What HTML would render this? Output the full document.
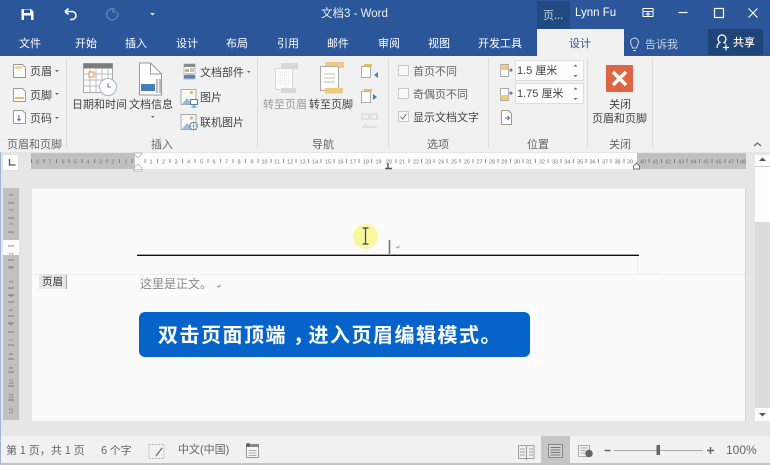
<!DOCTYPE html>
<html><head><meta charset="utf-8"><style>
html,body{margin:0;padding:0}
body{width:770px;height:465px;overflow:hidden;position:relative;background:#e6e6e6;font-family:"Liberation Sans","Noto Sans CJK SC",sans-serif;font-size:11px;color:#444}
div,span.t{position:absolute}
.t{position:absolute;white-space:nowrap;line-height:14px;font-family:"Noto Sans CJK SC",sans-serif;font-size:11px}
.w{color:#fff}.g{color:#9a9a9a}.m{color:#666}
svg{position:absolute;left:0;top:0}
</style></head><body>
<div style="left:0;top:0;width:770px;height:56px;background:#2b579a"></div>
<div style="left:0;top:56px;width:770px;height:96px;background:#f1f1f1"></div>
<div style="left:537px;top:29px;width:87px;height:27px;background:#f1f1f1"></div>
<div style="left:537px;top:1px;width:33px;height:28px;background:#214a80"></div>
<div style="left:708px;top:29px;width:55px;height:26px;background:#1f4478"></div>
<div style="left:515px;top:60px;width:69px;height:21px;background:#fdfdfd;border:1px solid #ddd;box-sizing:border-box"></div>
<div style="left:515px;top:83px;width:69px;height:21px;background:#fdfdfd;border:1px solid #ddd;box-sizing:border-box"></div>

<span class="t w" style="left:321px;top:7px;font-size:11.500px;font-family:'Liberation Sans','Noto Sans CJK SC',sans-serif;color:#e8eef6">文档3 - Word</span>
<span class="t" style="left:543px;top:8px;color:#c5d2e4">页...</span>
<span class="t w" style="left:575px;top:6px;font-family:'Liberation Sans',sans-serif;font-size:11.500px">Lynn Fu</span>

<span class="t w" style="left:19px;top:36px">文件</span>
<span class="t w" style="left:75px;top:36px">开始</span>
<span class="t w" style="left:125px;top:36px">插入</span>
<span class="t w" style="left:176px;top:36px">设计</span>
<span class="t w" style="left:226px;top:36px">布局</span>
<span class="t w" style="left:277px;top:36px">引用</span>
<span class="t w" style="left:327px;top:36px">邮件</span>
<span class="t w" style="left:378px;top:36px">审阅</span>
<span class="t w" style="left:428px;top:36px">视图</span>
<span class="t w" style="left:478px;top:36px">开发工具</span>
<span class="t" style="left:569px;top:36px;color:#2b579a">设计</span>
<span class="t" style="left:645px;top:37px;color:#c5d2e4">告诉我</span>
<span class="t w" style="left:733px;top:35px;font-weight:500">共享</span>

<span class="t" style="left:30px;top:64px">页眉</span>
<span class="t" style="left:30px;top:88px">页脚</span>
<span class="t" style="left:30px;top:111px">页码</span>
<span class="t m" style="left:7px;top:137px">页眉和页脚</span>
<span class="t" style="left:72px;top:97px">日期和时间</span>
<span class="t" style="left:129px;top:97px">文档信息</span>
<span class="t" style="left:200px;top:65px">文档部件</span>
<span class="t" style="left:200px;top:90px">图片</span>
<span class="t" style="left:200px;top:115px">联机图片</span>
<span class="t m" style="left:151px;top:137px">插入</span>
<span class="t g" style="left:263px;top:97px">转至页眉</span>
<span class="t" style="left:309px;top:97px">转至页脚</span>
<span class="t m" style="left:312px;top:137px">导航</span>
<span class="t m" style="left:413px;top:64px">首页不同</span>
<span class="t m" style="left:413px;top:87px">奇偶页不同</span>
<span class="t" style="left:413px;top:110px">显示文档文字</span>
<span class="t m" style="left:427px;top:137px">选项</span>
<span class="t" style="left:517px;top:64px;font-family:'Liberation Sans','Noto Sans CJK SC',sans-serif">1.5 厘米</span>
<span class="t" style="left:517px;top:87px;font-family:'Liberation Sans','Noto Sans CJK SC',sans-serif">1.75 厘米</span>
<span class="t m" style="left:527px;top:137px">位置</span>
<span class="t" style="left:609px;top:97px">关闭</span>
<span class="t" style="left:592px;top:111px">页眉和页脚</span>
<span class="t m" style="left:609px;top:137px">关闭</span>

<!-- work area -->
<div style="left:32px;top:189px;width:713px;height:232px;background:#fbfbfb;border-right:1px solid #d4d4d4"></div>
<div style="left:31px;top:153px;width:104px;height:16px;background:#c0c0c0"></div>
<div style="left:135px;top:153px;width:502px;height:16px;background:#fdfdfd"></div>
<div style="left:637px;top:153px;width:109px;height:16px;background:#c0c0c0"></div>
<div style="left:2px;top:154px;width:17px;height:17px;background:#fdfdfd;border:1px solid #e0e0e0;box-sizing:border-box"></div>
<div style="left:3px;top:188px;width:16px;height:232px;background:#c0c0c0"></div>
<div style="left:3px;top:240px;width:16px;height:15px;background:#fdfdfd"></div>
<div style="left:755px;top:155px;width:15px;height:253px;background:#dcdcdc"></div>
<div style="left:755px;top:155px;width:15px;height:12px;background:#fdfdfd;border-bottom:1px solid #ccc;box-sizing:border-box"></div>
<div style="left:755px;top:167px;width:15px;height:55px;background:#fdfdfd"></div>
<div style="left:755px;top:408px;width:15px;height:13px;background:#fdfdfd"></div>
<div style="left:0;top:436px;width:770px;height:29px;background:#f1f1f1"></div>
<div style="left:541px;top:436px;width:29px;height:27px;background:#c6c6c6"></div>
<div style="left:0;top:463px;width:770px;height:2px;background:#b9c5d4"></div>
<div style="left:0;top:152px;width:1px;height:312px;background:#9db4d2"></div>

<div style="left:139px;top:312px;width:391px;height:45px;background:#0563c9;border-radius:6px"></div>
<span class="t" style="left:158px;top:321px;line-height:26px;font-size:20px;font-weight:700;color:#fff;letter-spacing:1.500px">双击页面顶端<span style="position:relative;left:6px">，</span>进入页眉编辑模式。</span>

<div style="left:39px;top:274px;width:28px;height:15px;background:#e6e6e6;border-right:1px solid #aaa;box-sizing:border-box"></div>
<span class="t" style="left:42px;top:275px;color:#333;font-size:10.500px">页眉</span>
<span class="t" style="left:140px;top:276px;font-size:12px;line-height:16px;color:#8a8a8a;letter-spacing:0">这里是正文。</span>

<span class="t m" style="left:6px;top:443px;letter-spacing:.15px">第 1 页，共 1 页</span>
<span class="t m" style="left:101px;top:443px">6 个字</span>
<span class="t m" style="left:178px;top:443px;font-family:'Liberation Sans','Noto Sans CJK SC',sans-serif">中文(中国)</span>
<span class="t m" style="left:726px;top:443px;font-family:'Liberation Sans',sans-serif;font-size:12px">100%</span>

<svg width="770" height="465" viewBox="0 0 770 465" fill="none">
<!-- QAT -->
<path d="M21.500 9h9.500l2.500 2.500v8.500h-12z" fill="#fff"/><rect x="24" y="9.500" width="6" height="3.500" fill="#2b579a"/><rect x="24" y="15.500" width="7" height="4.500" fill="#2b579a"/>
<path d="M65 11.500h7a4 4 0 0 1 0 8h-2M65 11.500l3.500-3M65 11.500l3.500 3" stroke="#fff" stroke-width="1.600"/>
<path d="M115 9.500a5.500 5.500 0 1 0 2.500 3M113 8v4h4" stroke="#5f7fb0" stroke-width="1.500"/>
<path d="M150 13h5l-2.500 2.500z" fill="#dfe7f2"/>
<!-- window controls -->
<path d="M643 8.500h10v8h-10zM643 11.500h10M648 11.500v5M645.500 14h5" stroke="#fff"/>
<path d="M678.500 12.500h9" stroke="#fff" stroke-width="1.200"/>
<rect x="714.500" y="8.500" width="9" height="9" stroke="#fff" stroke-width="1.200"/>
<path d="M748.500 8.500l9 9M757.500 8.500l-9 9" stroke="#fff" stroke-width="1.100"/>
<!-- tell me / share -->
<path d="M632.500 48c0-2-2-3-2-6a4 4 0 0 1 8 0c0 3-2 4-2 6zM633 50.500h3" stroke="#c5d2e4"/>
<path d="M717 48c0-3 1-4.500 3-5.500a4 4 0 1 1 4 0c.7.3 1.200.7 1.700 1.200M726 44.500v6M723 47.500h6" stroke="#fff" stroke-width="1.200"/>
<!-- header/footer/page -->
<g stroke="#9a9a9a" fill="#fff"><path d="M13.500 64.500h9l3 3v10h-12z"/><path d="M13.500 88.500h9l3 3v10h-12z"/><path d="M13.500 110.500h9l3 3v10h-12z"/></g>
<path d="M15 66h7v3h-7z" fill="#f0d9a0"/><path d="M15 97h9v2h-9z" fill="#e8bd5f"/><path d="M19 115v5M17.500 119l1.500 1.500 1.500-1.500" stroke="#3d6fb0"/>
<path d="M55 70h4l-2 2zM55 93h4l-2 2zM55 117h4l-2 2zM247 71h3.500l-1.750 2zM151 116h3.500l-1.750 2z" fill="#666"/>
<path d="M66.500 58v90M257.500 58v90M388.500 58v90M488.500 58v90M587.500 58v90M652.500 58v90" stroke="#dcdcdc"/>
<!-- date -->
<rect x="83.500" y="63.500" width="29" height="29" fill="#fff" stroke="#aaa"/><rect x="83.500" y="63.500" width="29" height="5" fill="#7c7c7c"/>
<path d="M83.500 74h29M83.500 80h29M83.500 86h29M90 68v24M96 68v24M102 68v24M108 68v24" stroke="#bbb"/>
<rect x="89" y="72" width="5" height="5" stroke="#e08a40" fill="#fff"/>
<circle cx="108" cy="87" r="8.500" fill="#fff" stroke="#9db8d8"/><path d="M108 83v4h3" stroke="#777"/>
<!-- doc info -->
<path d="M139.500 63h11l11 11v21h-22z" fill="#fff" stroke="#999"/><path d="M150.500 63v11h11" stroke="#999"/>
<rect x="141" y="84" width="14" height="7" fill="#4a7ebb"/><path d="M157 79v14M160 79v14" stroke="#777"/>
<!-- parts -->
<rect x="184" y="64" width="11" height="15" fill="#fff" stroke="#bbb"/><rect x="184" y="64" width="11" height="3" fill="#8a8a8a"/><rect x="185" y="69" width="4" height="3" fill="#e0b050"/><path d="M190 69h4M190 71h4M185 74h9" stroke="#888"/><rect x="184" y="75" width="11" height="3.500" fill="#5b85b8"/>
<!-- picture -->
<rect x="181" y="89.500" width="15" height="15" fill="#f8f8f8" stroke="#aaa"/><circle cx="191.500" cy="92.500" r="1.500" fill="#e0b050"/><path d="M182 104l5-6 5 6z" fill="#9db8d8"/><rect x="190.500" y="99.500" width="7" height="5" fill="#fff" stroke="#4a7ebb"/><path d="M194 105v2M191.500 107h5" stroke="#4a7ebb"/>
<rect x="181" y="114.500" width="15" height="15" fill="#f8f8f8" stroke="#aaa"/><circle cx="191.500" cy="118" r="1.500" fill="#e0b050"/><path d="M182 129l5-6 5 6z" fill="#9db8d8"/><circle cx="193.500" cy="126" r="3.800" fill="#fff" stroke="#4a7ebb"/><path d="M190 126h7M193.500 122.500v7" stroke="#4a7ebb" stroke-width=".6"/>
<!-- nav -->
<rect x="281" y="63" width="17" height="6" fill="#d8d8d8"/><rect x="275.500" y="68.500" width="17" height="21" fill="#fbfbfb" stroke="#d8d8d8"/><path d="M278 72h12M278 75h12M278 78h12M278 81h12M278 84h12" stroke="#ddd" stroke-dasharray="1 1"/><rect x="281" y="88" width="15" height="5" fill="#d8d8d8"/>
<rect x="325" y="62" width="19" height="6" fill="#eecb80"/><rect x="320.500" y="66.500" width="18" height="24" fill="#fff" stroke="#aaa"/><path d="M324 74h11M324 78h11M324 82h11" stroke="#bbb"/><rect x="325" y="88" width="18" height="5.500" fill="#eecb80"/>
<g stroke="#aaa" fill="#fff"><rect x="361.500" y="66.500" width="9" height="11"/><rect x="361.500" y="91.500" width="9" height="11"/></g>
<rect x="364" y="64" width="8" height="2.500" fill="#e8bd5f"/><rect x="364" y="89" width="8" height="2.500" fill="#e8bd5f"/>
<path d="M378 72v6l-4-3zM373 94v6l4-3z" fill="#4a7ebb"/>
<path d="M362 114h7v5h-7zM371 114h6v5h-6zM364 125h3M362 127h15" stroke="#cfcfcf"/>
<!-- checkboxes -->
<g stroke="#c8c8c8" fill="#f8f8f8"><rect x="398.500" y="65.500" width="10" height="10"/><rect x="398.500" y="88.500" width="10" height="10"/><rect x="398.500" y="111.500" width="10" height="10"/></g>
<path d="M400.500 116.500l2 2.500 4-5" stroke="#666"/>
<!-- position -->
<rect x="500.500" y="64.500" width="8" height="12" fill="#fff" stroke="#aaa"/><rect x="500.500" y="65" width="8" height="5" fill="#eecb80"/><path d="M511 69v3M509.500 70.500l1.500-1.500 1.500 1.500" stroke="#3d6fb0"/>
<rect x="500.500" y="88.500" width="8" height="12" fill="#fff" stroke="#aaa"/><rect x="500.500" y="95" width="8" height="5" fill="#eecb80"/><path d="M511 92v3M509.500 93.500l1.500-1.500 1.500 1.500" stroke="#3d6fb0"/>
<path d="M573.500 66.500h4l-2-2zM573.500 75h4l-2 2zM573.500 89.500h4l-2-2zM573.500 98h4l-2 2z" fill="#666"/>
<path d="M501.500 110.500h7l3 3v11h-10z" fill="#fff" stroke="#999"/><path d="M505 118h4M507.500 116l2 2-2 2" stroke="#3d6fb0"/>
<!-- close -->
<rect x="606" y="65" width="27" height="27" rx="1" fill="#dd6543"/><path d="M613 72l13 13M626 72l-13 13" stroke="#fff" stroke-width="3.500"/>
<path d="M754 146l3.500-3 3.500 3" stroke="#666" stroke-width="1.200"/>
<!-- tab stop corner -->
<path d="M9.500 159v6h6" stroke="#555" stroke-width="1.300"/>
<!-- ruler numbers -->
<g font-family="Liberation Sans,sans-serif" font-size="5.500" fill="#777" text-anchor="middle">
<text x="37.500" y="163.500">8</text><text x="50" y="163.500">7</text><text x="63" y="163.500">6</text><text x="75.500" y="163.500">5</text><text x="88" y="163.500">4</text><text x="100.500" y="163.500">3</text><text x="113" y="163.500">2</text><text x="126" y="163.500">1</text>
<text x="151" y="163.500">1</text><text x="163.500" y="163.500">2</text><text x="176" y="163.500">3</text><text x="188.500" y="163.500">4</text><text x="201.500" y="163.500">5</text><text x="214" y="163.500">6</text><text x="226.500" y="163.500">7</text><text x="239" y="163.500">8</text><text x="252" y="163.500">9</text><text x="264.500" y="163.500">10</text><text x="277" y="163.500">11</text><text x="290" y="163.500">12</text><text x="302.500" y="163.500">13</text><text x="315" y="163.500">14</text><text x="328" y="163.500">15</text><text x="340.500" y="163.500">16</text><text x="353" y="163.500">17</text><text x="366" y="163.500">18</text><text x="378.500" y="163.500">19</text><text x="389" y="163.500">20</text><text x="402" y="163.500">21</text><text x="416" y="163.500">22</text><text x="428" y="163.500">23</text><text x="441" y="163.500">24</text><text x="454" y="163.500">25</text><text x="467" y="163.500">26</text><text x="479.500" y="163.500">27</text><text x="492" y="163.500">28</text><text x="504.500" y="163.500">29</text><text x="517" y="163.500">30</text><text x="529" y="163.500">31</text><text x="542" y="163.500">32</text><text x="555" y="163.500">33</text><text x="567.500" y="163.500">34</text><text x="580" y="163.500">35</text><text x="592.500" y="163.500">36</text><text x="605" y="163.500">37</text><text x="617.500" y="163.500">38</text><text x="630" y="163.500">39</text><text x="643" y="163.500">40</text><text x="655.500" y="163.500">41</text><text x="668" y="163.500">42</text><text x="681" y="163.500">43</text><text x="693.500" y="163.500">44</text><text x="706" y="163.500">45</text><text x="718.500" y="163.500">46</text><text x="731" y="163.500">47</text><text x="743" y="163.500">48</text>
</g>
<path d="M31.500 159v4M44 159v4M56.500 159v4M69 159v4M82 159v4M94.500 159v4M107 159v4M119.500 159v4M132 159v4M145 159v4M157.500 159v4M170 159v4M182.500 159v4M195 159v4M208 159v4M220.500 159v4M233 159v4M245.500 159v4M258 159v4M271 159v4M283.500 159v4M296 159v4M308.500 159v4M321 159v4M334 159v4M346.500 159v4M359 159v4M371.500 159v4M396 159v4M409 159v4M421.500 159v4M434 159v4M447 159v4M460 159v4M473 159v4M485.500 159v4M498 159v4M510.500 159v4M523 159v4M535.500 159v4M548 159v4M561 159v4M573.500 159v4M586 159v4M598.500 159v4M611 159v4M624 159v4M649 159v4M661.500 159v4M674.500 159v4M687 159v4M699.500 159v4M712 159v4M725 159v4M737.500 159v4" stroke="#666" stroke-width=".7"/>
<!-- indent markers -->
<path d="M134 153h8v1l-4 4-4-4zM134 168l4-4 4 4v2h-8z" fill="#fbfbfb" stroke="#aaa" stroke-width=".7"/><path d="M134 169.500h8v1.500h-8z" fill="#fff" stroke="#999" stroke-width=".6"/>
<path d="M388 163v5M385 168.500h7" stroke="#555" stroke-width="1.400"/>
<path d="M633.500 169v-3l3-3 3 3v3z" fill="#fff" stroke="#777"/>
<path d="M759 161h7l-3.500-3.500z" fill="#555"/><path d="M759 413h7l-3.500 3.500z" fill="#555"/>
<!-- vertical ruler -->
<path d="M8 203h6M8 218h6M8 232h6M8 246h6M8 260h6M8 267h6M8 288h6M8 295h6M8 302h6M8 316h6M8 323h6M8 332h6M8 345h6M8 359h6M8 372h6M8 386h6M8 400h6" stroke="#666" stroke-width=".7"/>
<g font-family="Liberation Sans,sans-serif" font-size="5" fill="#777" text-anchor="middle">
<text transform="translate(13 195) rotate(-90)">3</text><text transform="translate(13 210) rotate(-90)">2</text><text transform="translate(13 224) rotate(-90)">1</text><text transform="translate(13 254) rotate(-90)">1</text><text transform="translate(13 268) rotate(-90)">2</text><text transform="translate(13 282) rotate(-90)">3</text><text transform="translate(13 296) rotate(-90)">4</text><text transform="translate(13 310) rotate(-90)">5</text><text transform="translate(13 324) rotate(-90)">6</text><text transform="translate(13 340) rotate(-90)">7</text><text transform="translate(13 354) rotate(-90)">8</text><text transform="translate(13 368) rotate(-90)">9</text><text transform="translate(13 382) rotate(-90)">10</text><text transform="translate(13 396) rotate(-90)">11</text><text transform="translate(13 411) rotate(-90)">12</text>
</g>
<!-- page -->
<path d="M32 274.500h104M140 274.500h605" stroke="#e2e2e2" stroke-dasharray="1 1"/>
<path d="M137 255.300h502" stroke="#111" stroke-width="1.300"/>
<path d="M637.500 256v18h21" stroke="#ececec"/>
<circle cx="365.500" cy="236.500" r="12.500" fill="#fbf7a0"/>
<path d="M362.500 228h6M362.500 244h6M365.500 228v16" stroke="#2c4a70" stroke-width="1.200"/>
<path d="M389.500 240v14" stroke="#777" stroke-width="1.600"/>
<path d="M399 245v2.500h-2.500M397.500 246.500l-1 1 1 1" stroke="#999" stroke-width=".7"/>
<path d="M220 284v2.500h-2.500M218.500 285.500l-1 1 1 1" stroke="#888" stroke-width=".7"/>
<!-- status icons -->
<path d="M149 444.500h15v14h-15z" stroke="#bbb" stroke-dasharray="2 1"/><path d="M156 456l6-8" stroke="#666" stroke-width="1.200"/>
<rect x="246.500" y="446.500" width="12" height="11" fill="#f8f8f8" stroke="#999"/><rect x="246" y="444" width="13" height="3" fill="#888"/><circle cx="248" cy="445" r="2" fill="#666"/><path d="M248.500 450.500h8M248.500 453h8M248.500 455.500h8" stroke="#aaa"/>
<path d="M518.500 445.500h7l1 1 1-1h6.500v13h-7l-.5 1-.5-1h-7.500zM526.500 447v12M520 449h5M520 452h5M520 455h5M529 449h4M529 452h4M529 455h4" stroke="#888" stroke-width=".8"/>
<rect x="548.500" y="444.500" width="14" height="13" fill="#d4d4d4" stroke="#888"/><path d="M550.500 447.500h10M550.500 450h10M550.500 452.500h10M550.500 455h10" stroke="#777"/>
<path d="M578.500 445.500h11v11h-11zM580.500 448h7M580.500 450.500h5M580.500 453h5" stroke="#999" stroke-width=".8"/><circle cx="589" cy="453.500" r="3.800" fill="#666"/>
<path d="M604.500 450.500h6M710.500 447v7M707 450.500h7" stroke="#666" stroke-width="1.500"/>
<path d="M614 450.500h89" stroke="#aaa"/><rect x="656.500" y="445" width="3.500" height="10" fill="#666"/>
</svg>
</body></html>
